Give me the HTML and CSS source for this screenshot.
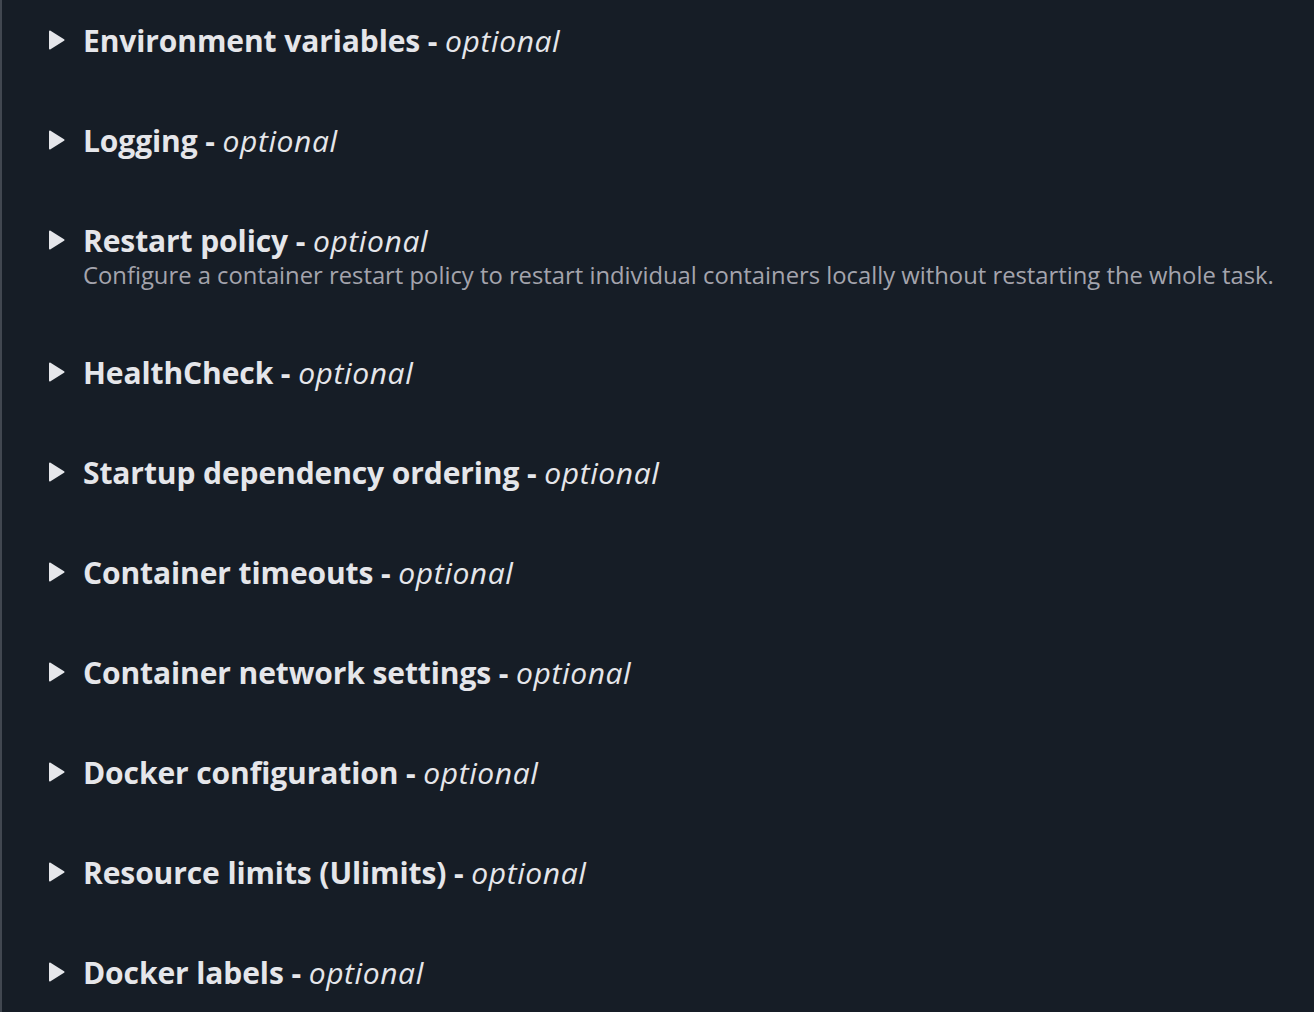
FILE: index.html
```html
<!DOCTYPE html>
<html lang="en">
<head>
<meta charset="utf-8">
<link rel="stylesheet" href="styles.css">
<title>Sections</title>
</head>
<body>
<div class="panel">
  <div class="section"><div class="head"><svg class="caret" viewBox="0 0 17 20"><path d="M2 1.5 L15.5 10 L2 18.5 Z" fill="#e5e6ea" stroke="#e5e6ea" stroke-width="2" stroke-linejoin="round"/></svg><span class="title">Environment variables - </span><i class="opt">optional</i></div></div>
  <div class="section"><div class="head"><svg class="caret" viewBox="0 0 17 20"><path d="M2 1.5 L15.5 10 L2 18.5 Z" fill="#e5e6ea" stroke="#e5e6ea" stroke-width="2" stroke-linejoin="round"/></svg><span class="title">Logging - </span><i class="opt">optional</i></div></div>
  <div class="section"><div class="head"><svg class="caret" viewBox="0 0 17 20"><path d="M2 1.5 L15.5 10 L2 18.5 Z" fill="#e5e6ea" stroke="#e5e6ea" stroke-width="2" stroke-linejoin="round"/></svg><span class="title">Restart policy - </span><i class="opt">optional</i></div><div class="desc">Configure a container restart policy to restart individual containers locally without restarting the whole task.</div></div>
  <div class="section"><div class="head"><svg class="caret" viewBox="0 0 17 20"><path d="M2 1.5 L15.5 10 L2 18.5 Z" fill="#e5e6ea" stroke="#e5e6ea" stroke-width="2" stroke-linejoin="round"/></svg><span class="title">HealthCheck - </span><i class="opt">optional</i></div></div>
  <div class="section"><div class="head"><svg class="caret" viewBox="0 0 17 20"><path d="M2 1.5 L15.5 10 L2 18.5 Z" fill="#e5e6ea" stroke="#e5e6ea" stroke-width="2" stroke-linejoin="round"/></svg><span class="title">Startup dependency ordering - </span><i class="opt">optional</i></div></div>
  <div class="section"><div class="head"><svg class="caret" viewBox="0 0 17 20"><path d="M2 1.5 L15.5 10 L2 18.5 Z" fill="#e5e6ea" stroke="#e5e6ea" stroke-width="2" stroke-linejoin="round"/></svg><span class="title">Container timeouts - </span><i class="opt">optional</i></div></div>
  <div class="section"><div class="head"><svg class="caret" viewBox="0 0 17 20"><path d="M2 1.5 L15.5 10 L2 18.5 Z" fill="#e5e6ea" stroke="#e5e6ea" stroke-width="2" stroke-linejoin="round"/></svg><span class="title">Container network settings - </span><i class="opt">optional</i></div></div>
  <div class="section"><div class="head"><svg class="caret" viewBox="0 0 17 20"><path d="M2 1.5 L15.5 10 L2 18.5 Z" fill="#e5e6ea" stroke="#e5e6ea" stroke-width="2" stroke-linejoin="round"/></svg><span class="title">Docker configuration - </span><i class="opt">optional</i></div></div>
  <div class="section"><div class="head"><svg class="caret" viewBox="0 0 17 20"><path d="M2 1.5 L15.5 10 L2 18.5 Z" fill="#e5e6ea" stroke="#e5e6ea" stroke-width="2" stroke-linejoin="round"/></svg><span class="title">Resource limits (Ulimits) - </span><i class="opt">optional</i></div></div>
  <div class="section"><div class="head"><svg class="caret" viewBox="0 0 17 20"><path d="M2 1.5 L15.5 10 L2 18.5 Z" fill="#e5e6ea" stroke="#e5e6ea" stroke-width="2" stroke-linejoin="round"/></svg><span class="title">Docker labels - </span><i class="opt">optional</i></div></div>
</div>
</body>
</html>
```
FILE: styles.css
```css
html, body {
  margin: 0;
  padding: 0;
  background: #161d26;
  height: 100%;
}
body {
  font-family: "Open Sans", "Noto Sans", sans-serif;
  color: #e5e6ea;
  overflow: hidden;
}
.panel {
  height: 1012px;
  border-left: 2px solid #414750;
  padding-left: 46px;
  padding-top: 19px;
  box-sizing: border-box;
}
.section {
  padding-bottom: 58px;
}
.head {
  display: flex;
  align-items: center;
  height: 42px;
}
.caret {
  width: 17px;
  height: 20px;
  margin-right: 18px;
  flex: none;
}
.title {
  font-size: 30px;
  font-weight: 700;
  white-space: pre;
  letter-spacing: -0.1px;
}
.opt {
  font-size: 30px;
  font-style: italic;
  font-weight: 500;
  white-space: pre;
  letter-spacing: 0.6px;
}
.desc {
  margin-left: 35px;
  font-size: 23.8px;
  color: #a4a4ad;
  line-height: 32px;
  margin-top: -2px;
  margin-bottom: 2px;
  white-space: nowrap;
}
```
